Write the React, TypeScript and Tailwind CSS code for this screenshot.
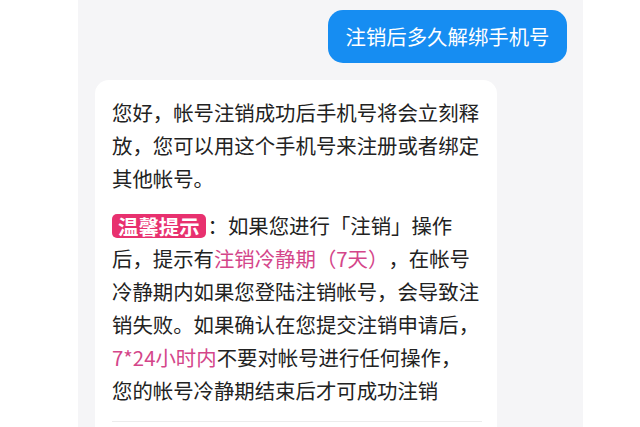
import React from 'react';

const FONT = { fontFamily: '"Noto Sans CJK SC", "Noto Sans", sans-serif' };

const pink = 'text-[#d4468a]';

export default function App() {
  return (
    <div
      className="flex h-[427px] w-[640px] overflow-hidden bg-white [text-spacing-trim:space-all]"
      style={FONT}
    >
      <div className="ml-[78px] flex w-[505px] flex-col bg-[#f5f5f7]">
        {/* question bubble */}
        <div className="flex justify-end pr-[16px] pt-[10px]">
          <div className="flex h-[53px] w-[239px] items-center justify-center rounded-[15px] bg-[#168df2] text-[20.4px] text-white">
            注销后多久解绑手机号
          </div>
        </div>

        {/* answer card */}
        <div className="ml-[17px] mt-[17px] w-[402px] flex-1 rounded-t-[14px] bg-white px-[17px] pt-[16px] text-[20.4px] leading-[33px] text-[#222]">
          <div className="whitespace-nowrap">
            <div>您好，帐号注销成功后手机号将会立刻释</div>
            <div>放，您可以用这个手机号来注册或者绑定</div>
            <div>其他帐号。</div>
          </div>

          <div className="mt-[14px] whitespace-nowrap">
            <div className="flex items-center">
              <span className="rounded-[5px] bg-[#e8316f] px-[6px] text-[20.4px] font-bold leading-[24px] text-white">
                温馨提示
              </span>
              <span className="ml-[2px]">：</span>
              <span>如果您进行</span>
              <span>「注销」</span>
              <span>操作</span>
            </div>
            <div>
              后，提示有<span className={pink}>注销冷静期（7天）</span>，在帐号
            </div>
            <div>冷静期内如果您登陆注销帐号，会导致注</div>
            <div>销失败。如果确认在您提交注销申请后，</div>
            <div>
              <span className={pink}>7*24小时内</span>不要对帐号进行任何操作，
            </div>
            <div>您的帐号冷静期结束后才可成功注销</div>
          </div>

          <div className="mt-[14px] h-px w-[370px] bg-[#ececec]" />
        </div>
      </div>
    </div>
  );
}
